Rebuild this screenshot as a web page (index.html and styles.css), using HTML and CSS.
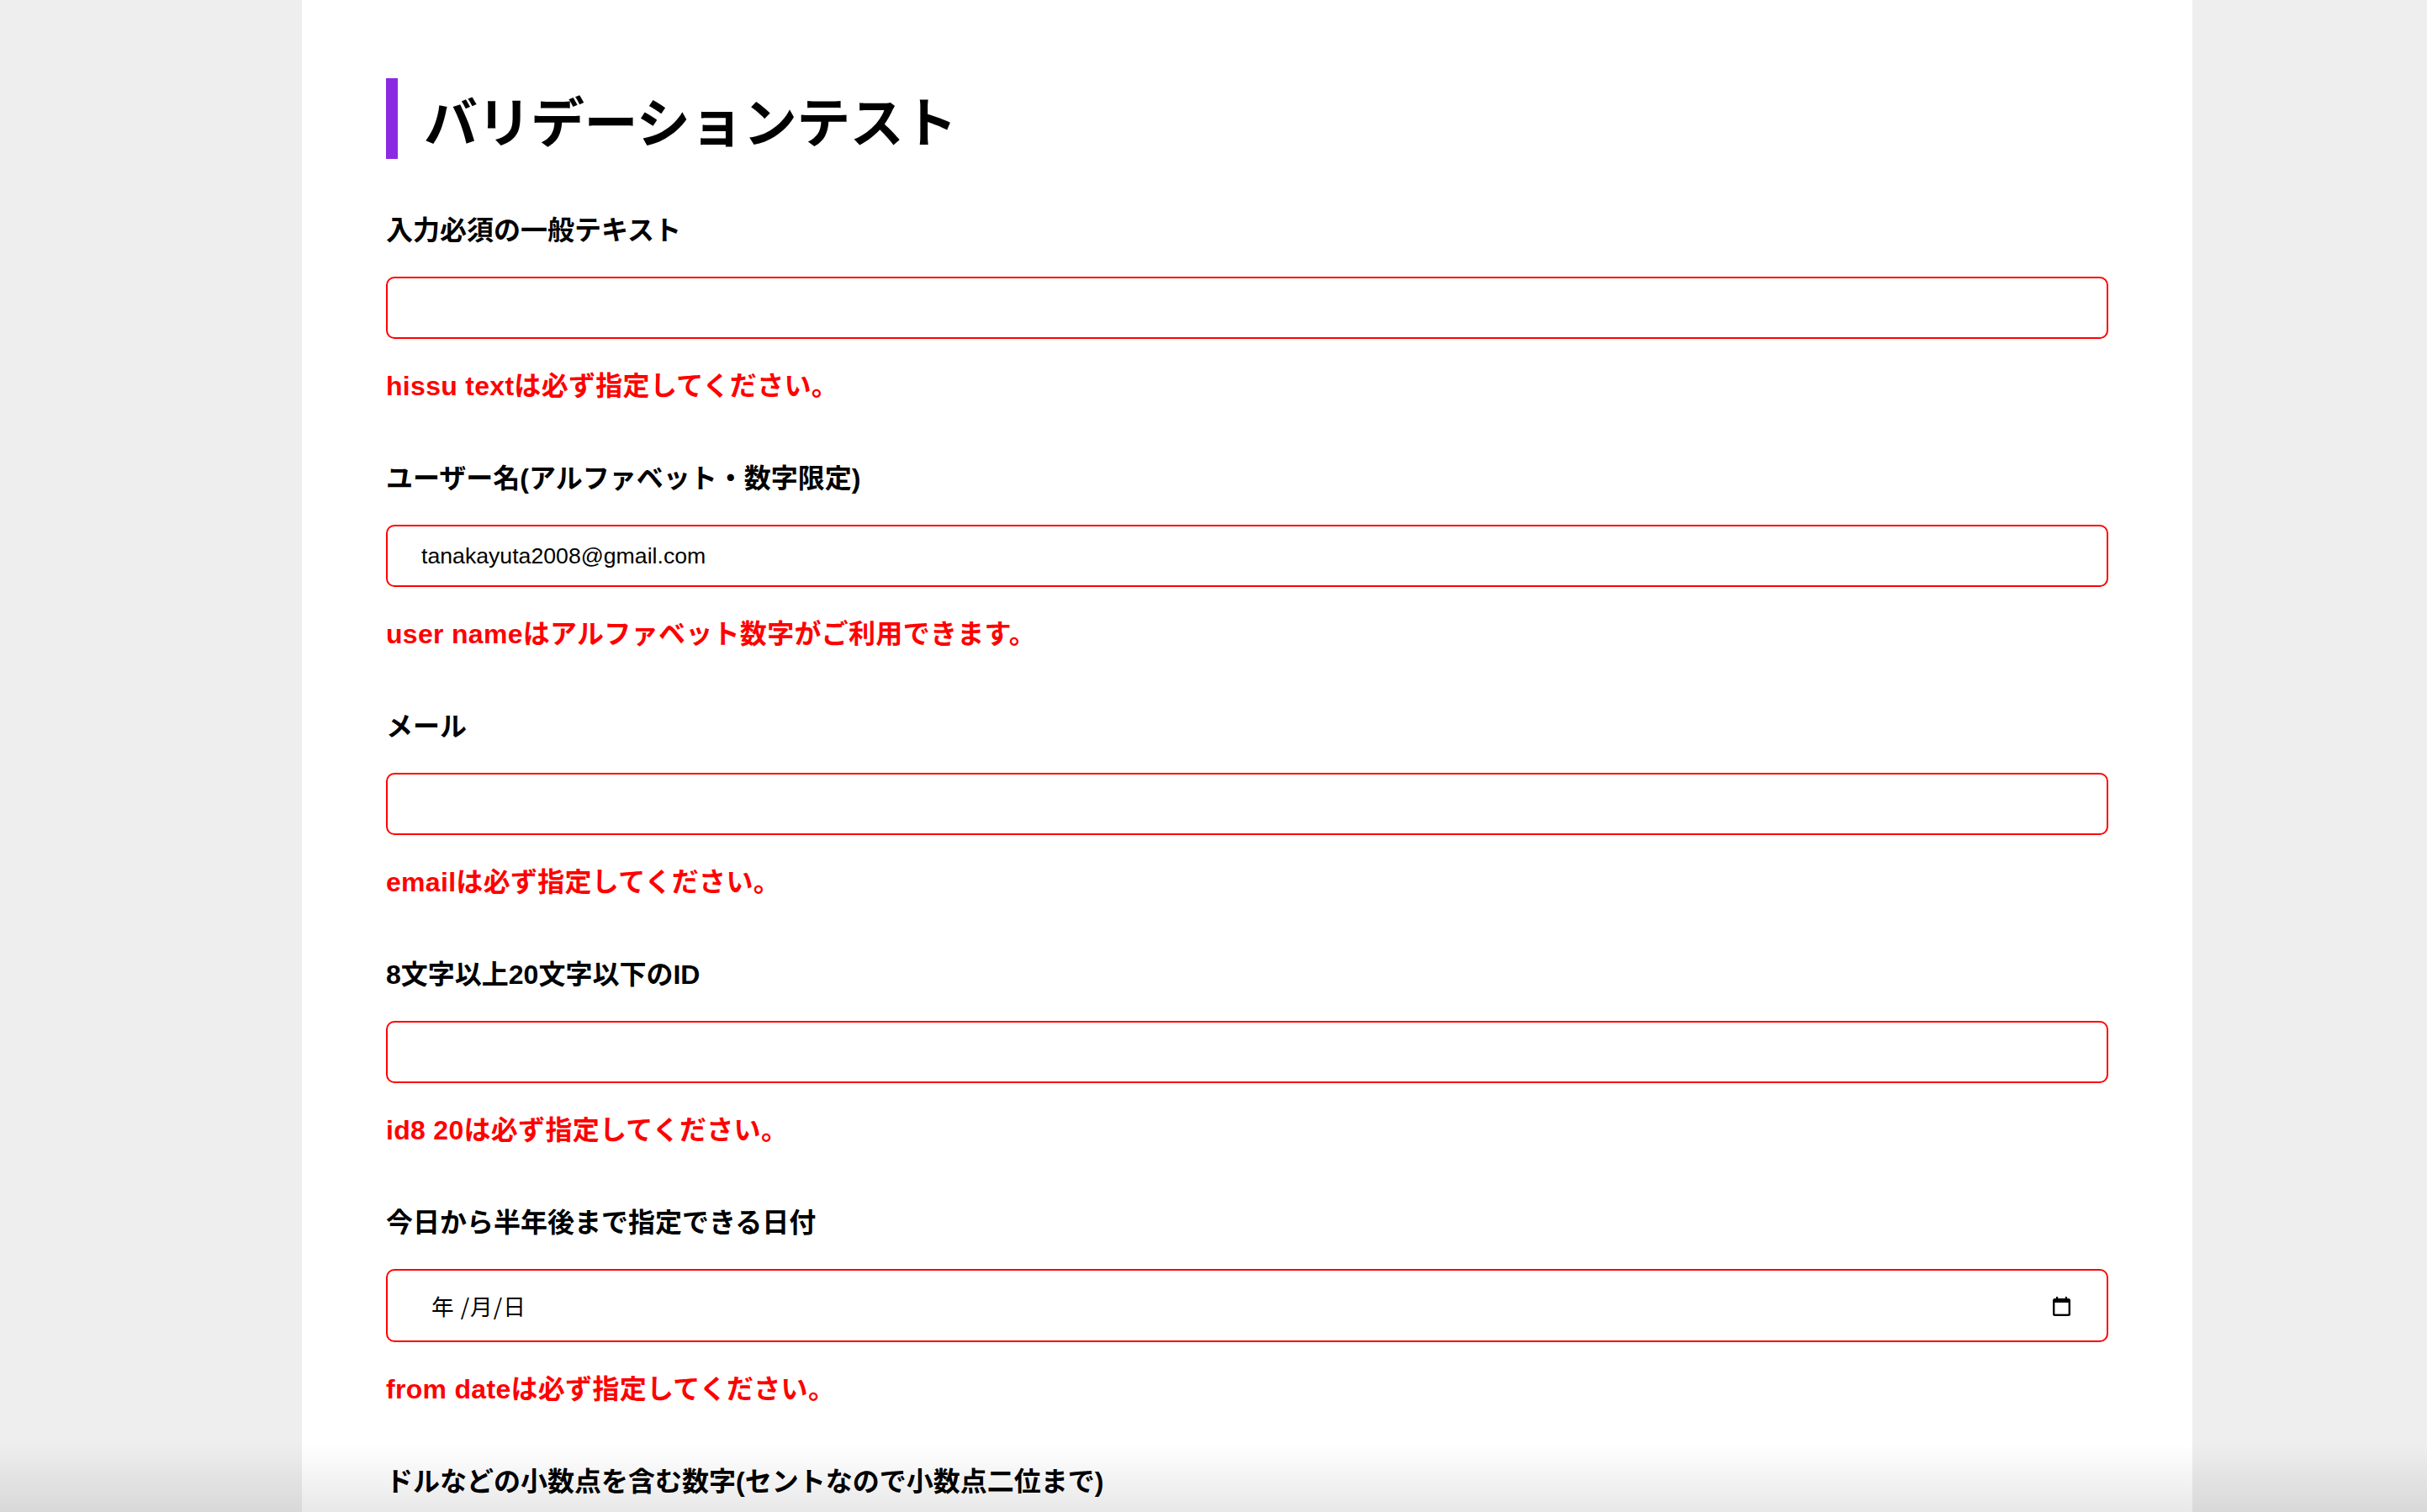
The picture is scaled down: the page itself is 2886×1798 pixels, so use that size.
FILE: index.html
```html
<!DOCTYPE html>
<html lang="ja">
<head>
<meta charset="utf-8">
<title>バリデーションテスト</title>
<link rel="stylesheet" href="styles.css">
</head>
<body>
<main class="page">
  <h1 class="title">バリデーションテスト</h1>

  <div class="field">
    <label class="label" for="hissu">入力必須の一般テキスト</label>
    <input class="input" id="hissu" type="text" value="">
    <p class="error">hissu textは必ず指定してください。</p>
  </div>

  <div class="field">
    <label class="label" for="user">ユーザー名(アルファベット・数字限定)</label>
    <input class="input" id="user" type="text" value="tanakayuta2008@gmail.com">
    <p class="error">user nameはアルファベット数字がご利用できます。</p>
  </div>

  <div class="field">
    <label class="label" for="mail">メール</label>
    <input class="input" id="mail" type="text" value="">
    <p class="error">emailは必ず指定してください。</p>
  </div>

  <div class="field">
    <label class="label" for="id820">8文字以上20文字以下のID</label>
    <input class="input" id="id820" type="text" value="">
    <p class="error">id8 20は必ず指定してください。</p>
  </div>

  <div class="field">
    <label class="label">今日から半年後まで指定できる日付</label>
    <div class="input date-input">
      <span class="date-text">年 /月/日</span>
      <svg class="cal-icon" width="21" height="23" viewBox="0 0 21 23" aria-hidden="true">
        <rect x="4" y="0" width="2.2" height="4" fill="#000"/>
        <rect x="14.8" y="0" width="2.2" height="4" fill="#000"/>
        <rect x="0" y="2" width="21" height="21" rx="2.5" fill="#000"/>
        <rect x="2.4" y="7" width="16.2" height="13.6" fill="#fff"/>
      </svg>
    </div>
    <p class="error">from dateは必ず指定してください。</p>
  </div>

  <div class="field">
    <label class="label" for="dollar">ドルなどの小数点を含む数字(セントなので小数点二位まで)</label>
    <input class="input" id="dollar" type="text" value="">
  </div>
</main>
<div class="bottom-shade"></div>
</body>
</html>
```

FILE: styles.css
```css
html, body {
  margin: 0;
  padding: 0;
  background: #eeeeee;
}

body {
  font-family: "Liberation Sans", "Noto Sans CJK JP", sans-serif;
  color: #000;
  overflow: hidden;
}

.page {
  box-sizing: border-box;
  width: 2248px;
  margin-left: 359px;
  min-height: 2400px;
  background: #ffffff;
  padding: 93px 100px 100px 100px;
}

.title {
  margin: 0 0 59px 0;
  border-left: 14px solid #8a2be2;
  padding-left: 31px;
  font-family: "Noto Sans CJK JP", sans-serif;
  font-size: 64px;
  line-height: 96px;
  font-weight: 700;
  letter-spacing: -0.5px;
}

.field {
  display: flex;
  flex-direction: column;
  align-items: stretch;
}

.label {
  display: block;
  font-size: 32px;
  line-height: 48px;
  font-weight: 700;
  padding-top: 2px;
  margin-bottom: 31px;
}

.input {
  box-sizing: border-box;
  display: block;
  width: 100%;
  height: 74px;
  margin: 0;
  border: 2px solid #ff0000;
  border-radius: 10px;
  padding: 0 40px;
  background: #fff;
  font-family: "Liberation Sans", Arial, sans-serif;
  font-size: 26.67px;
  color: #000;
  outline: none;
}

.date-input {
  height: 87px;
  display: flex;
  align-items: center;
  justify-content: space-between;
  padding: 0 43px 0 52px;
}

.date-text {
  font-family: "Noto Sans CJK JP", sans-serif;
  font-size: 26.67px;
  font-weight: 400;
  letter-spacing: 1px;
  color: #000;
}

.cal-icon {
  display: block;
  margin-top: 1px;
}

.error {
  margin: 30px 0 60px 0;
  padding-top: 2px;
  font-size: 32px;
  line-height: 48px;
  font-weight: 700;
  color: #ff0000;
  letter-spacing: 0.3px;
}

.bottom-shade {
  position: fixed;
  left: 0;
  right: 0;
  bottom: 0;
  height: 80px;
  background: linear-gradient(to bottom, rgba(0, 0, 0, 0), rgba(0, 0, 0, 0.09));
  pointer-events: none;
}
```
